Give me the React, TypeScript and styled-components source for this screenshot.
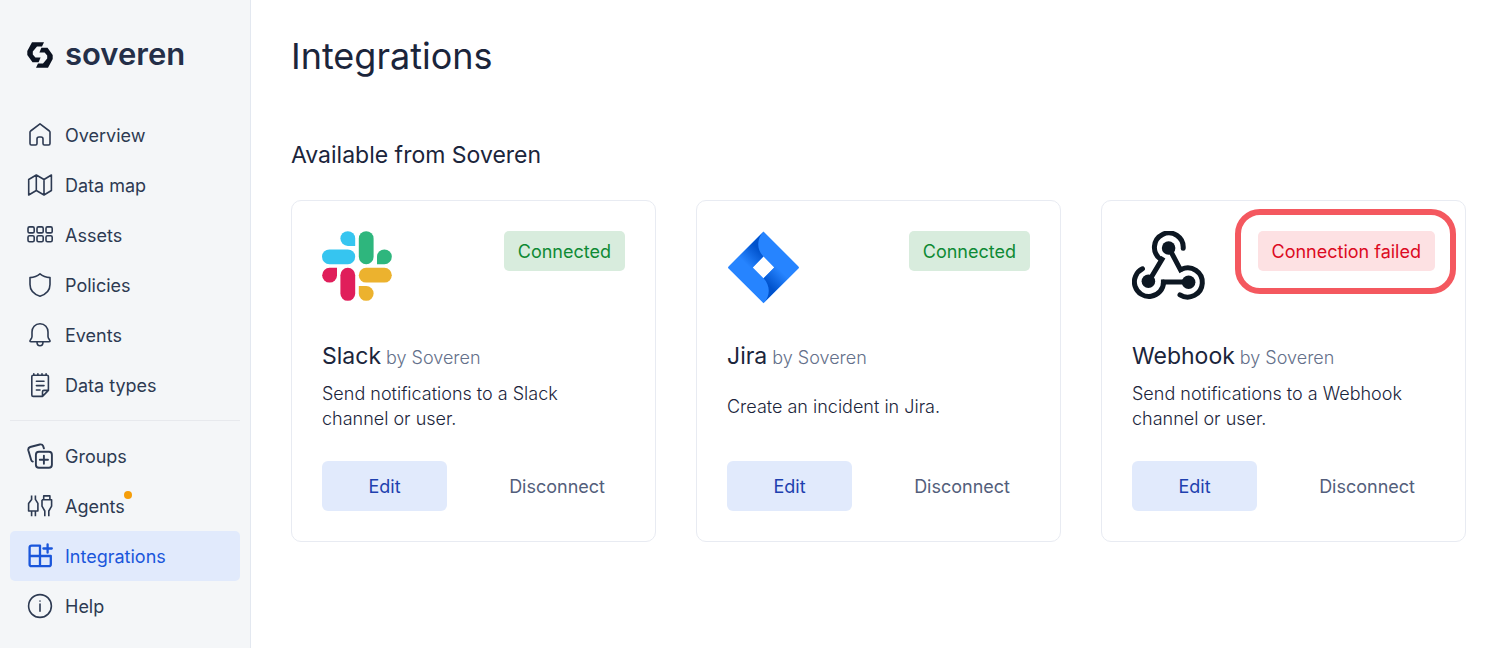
import React from "react";
import styled, { createGlobalStyle } from "styled-components";

const GlobalStyle = createGlobalStyle`
  *, *::before, *::after { box-sizing: border-box; }
  body {
    margin: 0;
    background: #ffffff;
    color: #1b253b;
    font-family: Inter, "Liberation Sans", sans-serif;
    font-size: 18px;
    line-height: 25px;
  }
  h1, h2, h3, p, ul { margin: 0; padding: 0; font-weight: 400; }
  button { font: inherit; border: 0; cursor: pointer; }
`;

const Page = styled.div`
  display: flex;
  min-height: 100vh;
`;

const Sidebar = styled.aside`
  flex: 0 0 251px;
  padding: 0 10px;
  background: #f4f6f8;
  border-right: 1px solid #e3e8f0;
`;

const Brand = styled.a`
  display: flex;
  align-items: center;
  gap: 12px;
  height: 110px;
  padding: 0 17px;
  color: #242f48;
  font-size: 31px;
  line-height: 30px;
  font-weight: 600;
  text-decoration: none;
`;

const BrandName = styled.span`
  padding-bottom: 2px;
`;

const NavList = styled.ul`
  list-style: none;

  & + & {
    margin-top: 10px;
    padding-top: 10px;
    border-top: 1px solid #e7e9ed;
  }
`;

const NavLink = styled.a<{ $active?: boolean }>`
  display: flex;
  align-items: center;
  gap: 12px;
  height: 50px;
  padding: 0 17px;
  border-radius: 5px;
  color: ${(p) => (p.$active ? "#1a56db" : "#2d3a52")};
  background: ${(p) => (p.$active ? "#e1eafc" : "transparent")};
  text-decoration: none;
`;

const NavLabel = styled.span`
  position: relative;
`;

const Dot = styled.span`
  position: absolute;
  top: -3px;
  right: -7px;
  width: 8px;
  height: 8px;
  border-radius: 50%;
  background: #f59e0b;
`;

const Icon = styled.svg`
  flex: none;
  width: 26px;
  height: 26px;
  fill: none;
  stroke: currentColor;
  stroke-width: 1.6;
  stroke-linecap: round;
  stroke-linejoin: round;
`;

const Main = styled.main`
  flex: 1;
  min-width: 0;
  padding: 31px 34px 40px 40px;
`;

const Title = styled.h1`
  font-size: 36px;
  line-height: 50px;
`;

const SectionTitle = styled.h2`
  margin: 59px 0 30px;
  font-size: 23px;
  line-height: 30px;
`;

const CardGrid = styled.div`
  display: grid;
  grid-template-columns: repeat(3, minmax(0, 1fr));
  gap: 40px;
`;

const Card = styled.article`
  display: flex;
  flex-direction: column;
  padding: 30px;
  border: 1px solid #e8ebf2;
  border-radius: 10px;
`;

const CardTop = styled.div`
  display: flex;
  align-items: flex-start;
  justify-content: space-between;
  height: 110px;
`;

const Logo = styled.svg`
  flex: none;
  width: 74px;
  height: 74px;
`;

const Badge = styled.span<{ $failed?: boolean }>`
  position: relative;
  padding: 8px 14px 7px;
  border-radius: 5px;
  white-space: nowrap;
  color: ${(p) => (p.$failed ? "#dc0a22" : "#0e8a34")};
  background: ${(p) => (p.$failed ? "#fde1e3" : "#d8ecdd")};
`;

const Highlight = styled.span`
  position: absolute;
  inset: -22px -21px -23px -23px;
  border: 6px solid #f4585f;
  border-radius: 25px;
`;

const CardTitle = styled.h3`
  display: flex;
  align-items: baseline;
  gap: 5px;
  font-size: 23px;
  line-height: 30px;
`;

const Vendor = styled.small`
  font-size: 18px;
  font-weight: 300;
  color: #64708a;
`;

const Description = styled.p`
  display: flex;
  align-items: center;
  min-height: 50px;
  max-width: 280px;
  margin: 8px 0 30px;
  font-weight: 300;
`;

const Actions = styled.div`
  display: flex;
  justify-content: space-between;
`;

const Button = styled.button<{ $primary?: boolean }>`
  height: 50px;
  min-width: 125px;
  padding: 0 20px;
  border-radius: 6px;
  color: ${(p) => (p.$primary ? "#1e40af" : "#535e7b")};
  background: ${(p) => (p.$primary ? "#e1eafc" : "transparent")};
`;

const icons: Record<string, React.ReactNode> = {
  Overview: (
    <path d="M13 1.8 3.6 9Q3 9.5 3 10.3V21.6Q3 23 4.4 23H8.6Q10 23 10 21.6V17Q10 15 12 15H14Q16 15 16 17V21.6Q16 23 17.4 23H21.6Q23 23 23 21.6V10.3Q23 9.5 22.4 9Z" />
  ),
  "Data map": <path d="M1.7 7.5 9.3 3 17 7.5 24.4 3V18.5L17 23 9.3 18.5 1.7 23ZM9.3 3V18.5M17 7.5V23" />,
  Assets: (
    <>
      {[4.9, 13.8].map((y) =>
        [1, 10, 19].map((x) => <rect key={`${x}-${y}`} x={x} y={y} width="6.2" height="6" rx="1.5" />)
      )}
    </>
  ),
  Policies: <path d="M13 1.8Q9 5.2 3 5.6V12.5C3 18.5 7 22.3 13 24.2 19 22.3 23 18.5 23 12.5V5.6Q17 5.2 13 1.8Z" />,
  Events: (
    <path d="M13 1.8C8 1.8 5 5.5 5 10V14.5Q5 16 3.6 17.6 2 19.8 4.2 19.8H21.8Q24 19.8 22.4 17.6 21 16 21 14.5V10C21 5.5 18 1.8 13 1.8ZM10 20C10 25 16 25 16 20" />
  ),
  "Data types": (
    <path d="M15.5 24.4H6.2Q4.8 24.4 4.8 23V4.6Q4.8 3.2 6.2 3.2H20Q21.4 3.2 21.4 4.6V18.4ZM15.5 24.4V19.8Q15.5 18.4 16.9 18.4H21.4M6.8 1.7V3.2M10.9 1.7V3.2M15 1.7V3.2M19.1 1.7V3.2M9.4 9.3H17M9.4 13.6H17M9.4 18H13" />
  ),
  Groups: (
    <g strokeWidth="1.9">
      <rect x="8.9" y="8.7" width="16" height="16" rx="3" />
      <path d="M16.9 12.6V20.8M12.8 16.7H21M5.8 18.6Q4.6 18.3 4.2 17L1.3 7.3Q.8 4.8 3.2 4L12.8 1.5Q15.3 1 16.2 3.2L16.9 5.4" />
    </g>
  ),
  Agents: (
    <path
      strokeLinecap="butt"
      d="M4.6 2.4V6.4L1.6 10.4V18H10.9V10.4L8.4 6.4V2.4M4.6 18V23.3M8.4 18V23.3M16.7 6.8V2.9H22.9V6.8M15 6.8H24.6V13.2L21.8 18V23.3M15 6.8V13.2L17.8 18V23.3"
    />
  ),
  Integrations: (
    <path
      strokeWidth="2.3"
      d="M13 2.6H4.6Q2.6 2.6 2.6 4.6V21.2Q2.6 23.2 4.6 23.2H21.8Q23.8 23.2 23.8 21.2V13H2.6M13 2.6V23.2M20.6 1.3V9.7M16.4 5.5H24.8"
    />
  ),
  Help: (
    <>
      <circle cx="13" cy="13" r="11.4" />
      <path d="M13 11V18.2M13 8V8.1" />
    </>
  ),
};

const primaryNav = ["Overview", "Data map", "Assets", "Policies", "Events", "Data types"];
const secondaryNav = ["Groups", "Agents", "Integrations", "Help"];

const SlackLogo = () => (
  <Logo viewBox="0 0 74 74" aria-hidden="true">
    <g fill="#36c5f0">
      <path d="M33.2 15H25.8A7.4 7.4 0 1 1 33.2 7.6Z" />
      <rect x="0" y="18.4" width="33.2" height="14.8" rx="7.4" />
    </g>
    <g fill="#2eb67d">
      <rect x="36.8" y="0.2" width="14.8" height="33" rx="7.4" />
      <path d="M55 33.2V25.8A7.4 7.4 0 1 1 62.4 33.2Z" />
    </g>
    <g fill="#e01e5a">
      <path d="M15 36.8V44.2A7.4 7.4 0 1 1 7.6 36.8Z" />
      <rect x="18.4" y="36.8" width="14.8" height="33" rx="7.4" />
    </g>
    <g fill="#ecb22e">
      <rect x="36.8" y="36.8" width="33" height="14.8" rx="7.4" />
      <path d="M36.8 55H44.2A7.4 7.4 0 1 1 36.8 62.4Z" />
    </g>
  </Logo>
);

const JiraLogo = () => (
  <Logo viewBox="0 0 74 74" aria-hidden="true">
    <defs>
      <linearGradient id="jiraTop" gradientUnits="userSpaceOnUse" x1="35" y1="17" x2="19" y2="33">
        <stop offset="0.15" stopColor="#0052cc" />
        <stop offset="1" stopColor="#2684ff" />
      </linearGradient>
      <linearGradient id="jiraBottom" gradientUnits="userSpaceOnUse" x1="38" y1="56" x2="54" y2="40">
        <stop offset="0.15" stopColor="#0052cc" />
        <stop offset="1" stopColor="#2684ff" />
      </linearGradient>
      <clipPath id="jiraClip">
        <path clipRule="evenodd" d="M36.5 0.5 71.8 36.4 36.5 72.3 1.2 36.4ZM36.5 25.6 25.8 36.4 36.5 47.2 47.2 36.4Z" />
      </clipPath>
    </defs>
    <path
      fill="#2684ff"
      fillRule="evenodd"
      d="M36.5 0.5 71.2 35.2Q72.6 36.5 71.2 37.8L36.5 72.3 1.8 37.8Q0.4 36.5 1.8 35.2ZM36.5 25.6 25.8 36.4 36.5 47.2 47.2 36.4Z"
    />
    <g clipPath="url(#jiraClip)">
      <path fill="url(#jiraTop)" d="M36.5 0.5C29.5 8 29.5 18.5 36.5 25.6L21 41 0 37Z" />
      <path fill="url(#jiraBottom)" d="M36.5 72.3C43.5 65 43.5 54.3 36.5 47.2L52 31.8 73 36Z" />
    </g>
  </Logo>
);

const WebhookLogo = () => (
  <Logo viewBox="0 0 74 74" aria-hidden="true">
    <g fill="none" stroke="#0d1722" strokeWidth="5">
      <path strokeLinecap="round" d="M51.2 17.3A14.4 14.4 0 1 0 28.6 28.2" />
      <path d="M28 27 30 28.3 17 50" />
      <path d="M37 17 48.5 38.8 49.5 38.2" />
      <path strokeLinecap="round" d="M49.5 38.2A14.6 14.6 0 1 1 48 63.8" />
      <path strokeLinecap="round" d="M10.5 37.8A14.6 14.6 0 1 0 31.6 51" />
      <path d="M31.4 53V50.9H57" />
    </g>
    <g fill="#0d1722">
      <circle cx="36.6" cy="17" r="6.8" />
      <circle cx="16.4" cy="50.3" r="6.8" />
      <circle cx="56.6" cy="51.3" r="6.8" />
    </g>
  </Logo>
);

const integrations = [
  { name: "Slack", logo: <SlackLogo />, text: "Send notifications to a Slack channel or user.", failed: false },
  { name: "Jira", logo: <JiraLogo />, text: "Create an incident in Jira.", failed: false },
  { name: "Webhook", logo: <WebhookLogo />, text: "Send notifications to a Webhook channel or user.", failed: true },
];

const Nav = ({ items }: { items: string[] }) => (
  <NavList>
    {items.map((name) => {
      const active = name === "Integrations";
      return (
        <li key={name}>
          <NavLink href="#" $active={active} aria-current={active ? "page" : undefined}>
            <Icon viewBox="0 0 26 26" aria-hidden="true">{icons[name]}</Icon>
            <NavLabel>
              {name}
              {name === "Agents" && <Dot />}
            </NavLabel>
          </NavLink>
        </li>
      );
    })}
  </NavList>
);

export default function App() {
  return (
    <Page>
      <GlobalStyle />
      <Sidebar>
        <Brand href="#">
          <svg width="26" height="26" viewBox="0 0 26 26" fill="#0b1220" aria-hidden="true">
            <path d="M5 .3H17L15 4.6H10L5.8 9.6V12.4L8.4 15.6H13.6L11.6 20.3H5.5L.3 13V9Z" />
            <path d="M21 25.7H9L11 21.4H16L20.2 16.4V13.6L17.6 10.4H12.4L14.4 5.7H20.5L25.7 13V17Z" />
          </svg>
          <BrandName>soveren</BrandName>
        </Brand>
        <nav aria-label="Main">
          <Nav items={primaryNav} />
          <Nav items={secondaryNav} />
        </nav>
      </Sidebar>
      <Main>
        <Title>Integrations</Title>
        <SectionTitle>Available from Soveren</SectionTitle>
        <CardGrid>
          {integrations.map((item) => (
            <Card key={item.name}>
              <CardTop>
                {item.logo}
                <Badge $failed={item.failed}>
                  {item.failed ? "Connection failed" : "Connected"}
                  {item.failed && <Highlight />}
                </Badge>
              </CardTop>
              <CardTitle>
                {item.name} <Vendor>by Soveren</Vendor>
              </CardTitle>
              <Description>{item.text}</Description>
              <Actions>
                <Button type="button" $primary>Edit</Button>
                <Button type="button">Disconnect</Button>
              </Actions>
            </Card>
          ))}
        </CardGrid>
      </Main>
    </Page>
  );
}
